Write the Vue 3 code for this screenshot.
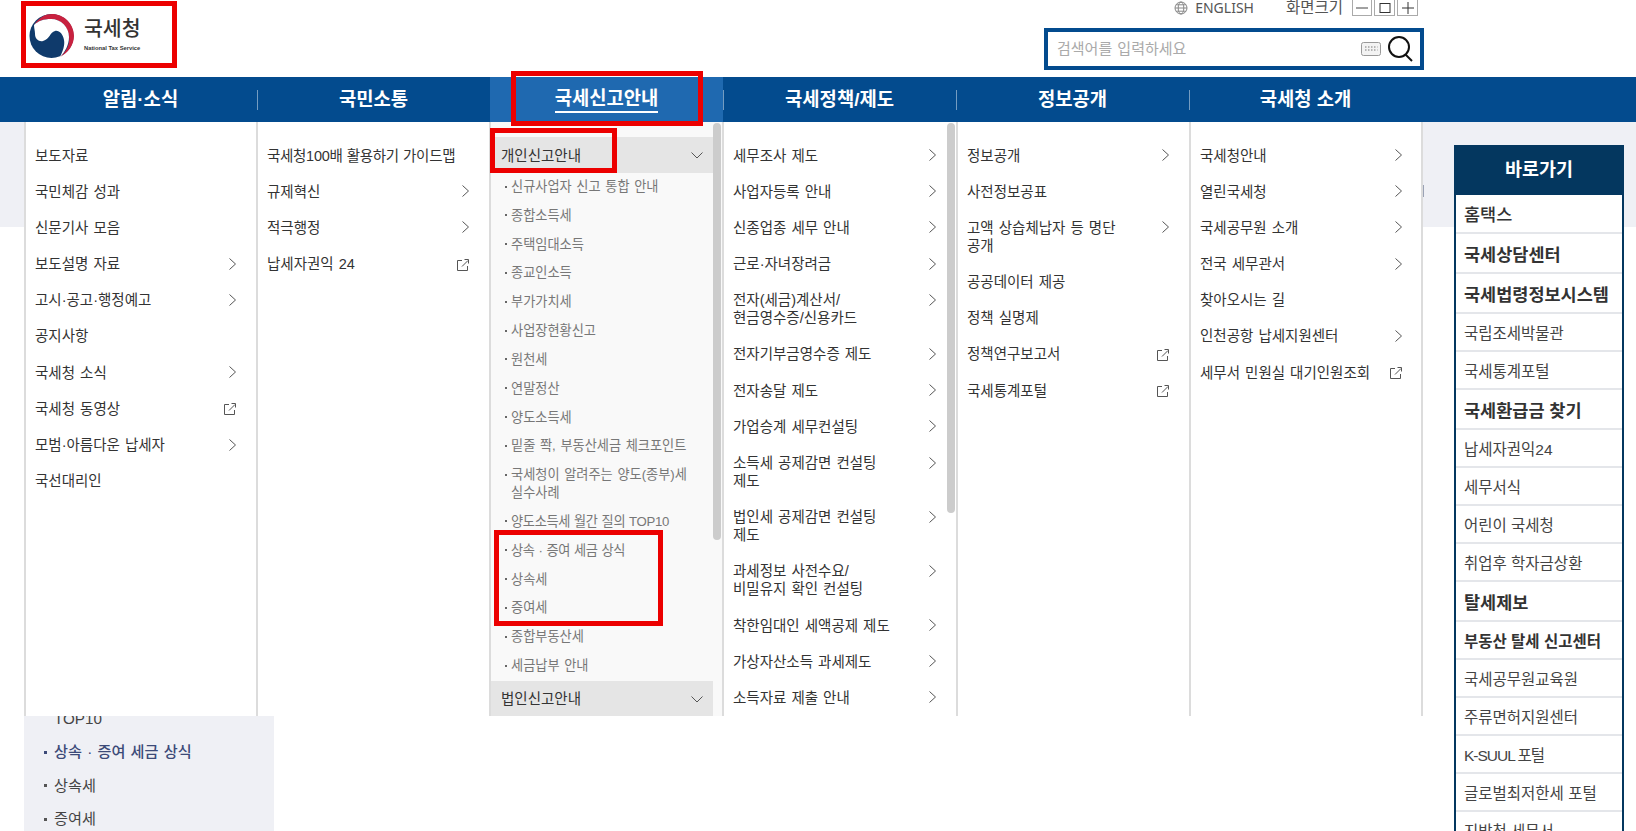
<script setup>
const navItems = ['알림·소식', '국민소통', '국세신고안내', '국세정책/제도', '정보공개', '국세청 소개']

const col1 = [
  { t: '보도자료' },
  { t: '국민체감 성과' },
  { t: '신문기사 모음' },
  { t: '보도설명 자료', i: 'arrow' },
  { t: '고시·공고·행정예고', i: 'arrow' },
  { t: '공지사항' },
  { t: '국세청 소식', i: 'arrow' },
  { t: '국세청 동영상', i: 'ext' },
  { t: '모범·아름다운 납세자', i: 'arrow' },
  { t: '국선대리인' }
]
const col2 = [
  { t: '국세청100배 활용하기 가이드맵', tight: true },
  { t: '규제혁신', i: 'arrow' },
  { t: '적극행정', i: 'arrow' },
  { t: '납세자권익 24', i: 'ext' }
]
const col4 = [
  { t: '세무조사 제도', i: 'arrow' },
  { t: '사업자등록 안내', i: 'arrow' },
  { t: '신종업종 세무 안내', i: 'arrow' },
  { t: '근로·자녀장려금', i: 'arrow' },
  { t: '전자(세금)계산서/\n현금영수증/신용카드', i: 'arrow' },
  { t: '전자기부금영수증 제도', i: 'arrow' },
  { t: '전자송달 제도', i: 'arrow' },
  { t: '가업승계 세무컨설팅', i: 'arrow' },
  { t: '소득세 공제감면 컨설팅\n제도', i: 'arrow' },
  { t: '법인세 공제감면 컨설팅\n제도', i: 'arrow' },
  { t: '과세정보 사전수요/\n비밀유지 확인 컨설팅', i: 'arrow' },
  { t: '착한임대인 세액공제 제도', i: 'arrow' },
  { t: '가상자산소득 과세제도', i: 'arrow' },
  { t: '소득자료 제출 안내', i: 'arrow' }
]
const col5 = [
  { t: '정보공개', i: 'arrow' },
  { t: '사전정보공표' },
  { t: '고액 상습체납자 등 명단\n공개', i: 'arrow' },
  { t: '공공데이터 제공' },
  { t: '정책 실명제' },
  { t: '정책연구보고서', i: 'ext' },
  { t: '국세통계포털', i: 'ext' }
]
const col6 = [
  { t: '국세청안내', i: 'arrow' },
  { t: '열린국세청', i: 'arrow' },
  { t: '국세공무원 소개', i: 'arrow' },
  { t: '전국 세무관서', i: 'arrow' },
  { t: '찾아오시는 길' },
  { t: '인천공항 납세지원센터', i: 'arrow' },
  { t: '세무서 민원실 대기인원조회', i: 'ext' }
]
const columns = [
  { key: 'a', rows: col1 },
  { key: 'b', rows: col2 },
  { key: 'c', sub: true },
  { key: 'd', rows: col4, thumb: true },
  { key: 'e', rows: col5 },
  { key: 'f', rows: col6 }
]

const subItems = [
  { t: '신규사업자 신고 통합 안내' },
  { t: '종합소득세' },
  { t: '주택임대소득' },
  { t: '종교인소득' },
  { t: '부가가치세' },
  { t: '사업장현황신고' },
  { t: '원천세' },
  { t: '연말정산' },
  { t: '양도소득세' },
  { t: '밑줄 쫙, 부동산세금 체크포인트' },
  { t: '국세청이 알려주는 양도(종부)세\n실수사례' },
  { t: '양도소득세 월간 질의 TOP10', tight: true },
  { t: '상속 · 증여 세금 상식', mark: true, tight: true },
  { t: '상속세' },
  { t: '증여세' },
  { t: '종합부동산세' },
  { t: '세금납부 안내' }
]

const quickLinks = [
  { t: '홈택스', c: 'home' },
  { t: '국세상담센터', c: 'lg' },
  { t: '국세법령정보시스템', c: 'lg' },
  { t: '국립조세박물관' },
  { t: '국세통계포털' },
  { t: '국세환급금 찾기', c: 'lg' },
  { t: '납세자권익24' },
  { t: '세무서식' },
  { t: '어린이 국세청' },
  { t: '취업후 학자금상환' },
  { t: '탈세제보', c: 'lg' },
  { t: '부동산 탈세 신고센터', c: 'bold' },
  { t: '국세공무원교육원' },
  { t: '주류면허지원센터' },
  { t: 'K-SUUL 포털', c: 'narrow' },
  { t: '글로벌최저한세 포털' },
  { t: '지방청 세무서' }
]
</script>

<template>
  <div class="page">
    <header class="top">
      <a class="logo">
        <svg class="emblem" viewBox="0 0 45 44" width="45" height="44">
          <circle cx="22.5" cy="22" r="22" fill="#0f3a6b" />
          <path d="M5 11C10 3 17 0 23 0C35 0 45 10 45 22C45 31 39 39 31 43C38 37 41 30 40 22C39 12 31 5 22 5C15 5 9 7 5 11Z" fill="#c8213f" />
          <path d="M5 11C9 7 15 5 22 5C32 5 40 13 40 23C40 31 36 38 31 43C34 37 36 31 35 26C34 20 30 16 26 17C21 18 21 25 14 27C10 28 6 25 6 20C6 17 5 14 5 11Z" fill="#fff" />
        </svg>
        <span class="logo-text">
          <strong>국세청</strong>
          <small>National Tax Service</small>
        </span>
      </a>
      <div class="top-right">
        <div class="util">
          <svg class="globe" viewBox="0 0 14 14" width="14" height="14" fill="none" stroke="#888" stroke-width="1">
            <circle cx="7" cy="7" r="6" />
            <ellipse cx="7" cy="7" rx="2.8" ry="6" />
            <path d="M1 7H13M2 3.8H12M2 10.2H12" />
          </svg>
          <span class="eng">ENGLISH</span>
          <span class="size-label">화면크기</span>
          <div class="size-btns">
            <button>
              <svg viewBox="0 0 12 12" width="12" height="12"><path d="M0 6H12" stroke="#444" /></svg>
            </button>
            <button>
              <svg viewBox="0 0 12 12" width="12" height="12"><rect x="1" y="1.5" width="10" height="9" fill="none" stroke="#333" /></svg>
            </button>
            <button>
              <svg viewBox="0 0 12 12" width="12" height="12"><path d="M0 6H12M6 0V12" stroke="#333" /></svg>
            </button>
          </div>
        </div>
        <div class="search">
          <input type="text" placeholder="검색어를 입력하세요" />
          <svg class="kbd" viewBox="0 0 20 14" width="20" height="14" fill="none">
            <rect x="0.5" y="0.5" width="19" height="13" rx="2" fill="#f3f3f3" stroke="#999" />
            <path d="M4 5H5.5M7 5H8.5M10 5H11.5M13 5H14.5M16 5H16.5M4 8H5.5M7 8H8.5M10 8H11.5M13 8H14.5M16 8H16.5" stroke="#777" />
          </svg>
          <svg class="glass" viewBox="0 0 25 26" width="25" height="26" fill="none" stroke="#111" stroke-width="2">
            <circle cx="11" cy="11" r="10" />
            <path d="M17.5 18.5L24 25" />
          </svg>
        </div>
      </div>
    </header>

    <nav class="gnb">
      <a v-for="(n, i) in navItems" :key="n" class="gnb-item" :class="{ active: i === 2 }">
        <span class="gnb-label">{{ n }}</span>
        <i v-if="i === 2" class="mark mark-nav"></i>
      </a>
    </nav>

    <main class="main">
      <section class="side">
        <ul>
          <li class="clip"><span></span>TOP10</li>
          <li class="on"><span class="dot"></span>상속 · 증여 세금 상식</li>
          <li><span class="dot"></span>상속세</li>
          <li><span class="dot"></span>증여세</li>
        </ul>
      </section>

      <aside class="quick">
        <h2>바로가기</h2>
        <a v-for="q in quickLinks" :key="q.t" class="quick-row" :class="q.c">{{ q.t }}</a>
      </aside>

      <div class="dropdown">
        <div v-for="c in columns" :key="c.key" class="col" :class="{ 'col-sub': c.sub }">
          <template v-if="!c.sub">
            <div v-for="r in c.rows" :key="r.t" class="row">
              <span class="row-text" :class="{ tight: r.tight }">{{ r.t }}</span>
              <svg v-if="r.i === 'arrow'" class="ico" viewBox="0 0 7 12" width="7" height="12" fill="none" stroke="#555">
                <path d="M0.5 0.5L6.5 6L0.5 11.5" />
              </svg>
              <svg v-if="r.i === 'ext'" class="ico ext" viewBox="0 0 12 12" width="12" height="12" fill="none" stroke="#555">
                <path d="M5 1.5H0.5V11.5H10.5V7" />
                <path d="M5 7.5L11 1.5M7.5 0.5H11.5V4.5" />
              </svg>
            </div>
          </template>
          <template v-else>
            <div class="acc-head">
              <span>개인신고안내</span>
              <svg viewBox="0 0 12 7" width="12" height="7" fill="none" stroke="#555"><path d="M0.5 0.5L6 6L11.5 0.5" /></svg>
              <i class="mark mark-head"></i>
            </div>
            <ul class="subs">
              <li v-for="s in subItems" :key="s.t">
                <span class="row-text" :class="{ tight: s.tight }">{{ s.t }}</span>
                <i v-if="s.mark" class="mark mark-subs"></i>
              </li>
            </ul>
            <div class="acc-head">
              <span>법인신고안내</span>
              <svg viewBox="0 0 12 7" width="12" height="7" fill="none" stroke="#555"><path d="M0.5 0.5L6 6L11.5 0.5" /></svg>
            </div>
          </template>
          <i v-if="c.sub" class="thumb thumb-c"></i>
          <i v-if="c.thumb" class="thumb thumb-d"></i>
        </div>
      </div>
    </main>
  </div>
</template>

<style>
html,
body {
  margin: 0;
  overflow: hidden;
  background: #fff;
}
</style>

<style scoped>
.page {
  width: 1636px;
  height: 831px;
  overflow: hidden;
  font-family: "Liberation Sans", "Noto Sans CJK KR", sans-serif;
  color: #333;
}

.top {
  height: 77px;
  box-sizing: border-box;
  display: flex;
  justify-content: space-between;
  align-items: flex-start;
  padding: 1px 212px 0 21px;
}

.logo {
  width: 156px;
  height: 67px;
  box-sizing: border-box;
  border: 5px solid #ec0000;
  display: flex;
  align-items: flex-start;
  padding: 8px 0 0 3px;
}
.emblem {
  flex: none;
}
.logo-text {
  display: flex;
  flex-direction: column;
  margin-left: 10px;
  margin-top: 3px;
}
.logo-text strong {
  font-size: 20.5px;
  line-height: 24px;
  font-weight: 500;
  color: #333;
}
.logo-text small {
  font-size: 5.8px;
  font-weight: 700;
  line-height: 8px;
  margin-top: 3px;
  color: #333;
}

.top-right {
  display: flex;
  flex-direction: column;
  align-items: flex-end;
  margin-top: -1px;
}
.util {
  height: 16px;
  display: flex;
  align-items: center;
  margin-right: 6px;
  margin-bottom: 12px;
  font-size: 15.5px;
  line-height: 16px;
  color: #555;
}
.globe {
  margin-right: 7px;
}
.eng {
  font-family: "Noto Sans", sans-serif;
  font-size: 14px;
  white-space: nowrap;
}
.size-label {
  margin-left: 32px;
  margin-top: -1px;
}
.size-btns {
  display: flex;
  gap: 2px;
  margin-left: 9px;
}
.size-btns button {
  width: 20px;
  height: 16px;
  padding: 0;
  border: 1px solid #aaa;
  border-top: 0;
  background: #fff;
  display: flex;
  align-items: center;
  justify-content: center;
}
.size-btns button:nth-child(n + 2) {
  width: 21px;
}

.search {
  width: 380px;
  height: 42px;
  box-sizing: border-box;
  border: 4px solid #034b8e;
  display: flex;
  align-items: center;
  padding: 0 7px 0 9px;
}
.search input {
  flex: 1;
  min-width: 0;
  border: 0;
  outline: 0;
  padding: 0 0 2px;
  font: inherit;
  font-size: 15px;
  word-spacing: 1px;
}
.search input::placeholder {
  color: #aaa;
}
.kbd {
  margin-right: 7px;
}

.gnb {
  position: relative;
  z-index: 2;
  height: 45px;
  background: #034b8e;
  display: flex;
  padding-left: 24px;
}
.gnb-item {
  position: relative;
  width: 233px;
  flex: none;
  display: flex;
  align-items: center;
  justify-content: center;
  box-sizing: border-box;
  color: #fff;
  font-size: 18.8px;
  font-weight: 700;
  line-height: 24px;
}
.gnb-item:not(:last-child)::after {
  content: "";
  position: absolute;
  right: -1px;
  top: 13px;
  height: 20px;
  border-right: 1px solid rgba(255, 255, 255, 0.45);
}
.gnb-item.active {
  background: #1f69b0;
}
.gnb-item.active .gnb-label {
  border-bottom: 2px solid #fff;
  margin-top: 1px;
}

.mark {
  position: absolute;
  box-sizing: border-box;
  border: 5px solid #ec0000;
  display: block;
  z-index: 3;
}
.mark-nav {
  left: 21px;
  top: -6px;
  width: 192px;
  height: 55px;
}
.mark-head {
  left: -1px;
  top: -9px;
  width: 127px;
  height: 45px;
}
.mark-subs {
  left: 3px;
  top: -7px;
  width: 169px;
  height: 96px;
}

.main {
  position: relative;
  height: 709px;
  display: flex;
  justify-content: space-between;
  align-items: flex-start;
  background: linear-gradient(#eff0f5 105px, #fff 105px);
}
.main::after {
  content: "";
  position: absolute;
  left: 1423px;
  top: 63px;
  width: 1px;
  height: 12px;
  background: #9aa2b5;
}

.side {
  margin: 594px 0 0 24px;
  width: 250px;
  height: 115px;
  background: #eff0f5;
  overflow: hidden;
}
.side ul {
  list-style: none;
  margin: -6px 0 0;
  padding: 0 0 0 20px;
  font-size: 15.2px;
  line-height: 18px;
  word-spacing: 1px;
  color: #444;
}
.side li {
  display: flex;
  align-items: center;
  height: 18px;
  margin-bottom: 15.4px;
}
.side .clip {
  padding-left: 10px;
}
.side .dot {
  width: 3px;
  height: 3px;
  background: #555;
  margin-right: 7px;
}
.side .on {
  color: #3c4a78;
  font-weight: 500;
}
.side .on .dot {
  background: #3c4a78;
}

.quick {
  margin: 23px 12px 0 0;
  width: 170px;
  box-sizing: border-box;
  border: 2px solid #04375f;
  border-bottom: 0;
  background: #fff;
}
.quick h2 {
  margin: -2px -2px 0;
  height: 50px;
  background: #04375f;
  color: #fff;
  font-size: 18.5px;
  font-weight: 700;
  line-height: 50px;
  text-align: center;
}
.quick-row {
  display: flex;
  align-items: center;
  height: 38px;
  box-sizing: border-box;
  padding-left: 8px;
  border-bottom: 2px solid #e4e6ea;
  font-size: 15.5px;
  color: #444;
}
.quick-row.lg {
  height: 40px;
  font-size: 17.5px;
  font-weight: 700;
  color: #333;
}
.quick-row.home {
  height: 39px;
  font-size: 17.5px;
  font-weight: 500;
  color: #333;
}
.quick-row.bold {
  font-weight: 700;
  color: #333;
}
.quick-row.narrow {
  letter-spacing: -1px;
}

.dropdown {
  position: absolute;
  left: 24px;
  top: 0;
  height: 594px;
  display: grid;
  grid-template-columns: 232px 233px 233px 234px 233px 234px;
  background: #fff;
  z-index: 1;
}
.col {
  position: relative;
  box-sizing: border-box;
  border-left: 2px solid #dcdcdc;
  padding: 15px 20px 0 9px;
  overflow: hidden;
  height: 594px;
}
.col:last-child {
  border-right: 2px solid #dcdcdc;
  padding-right: 19px;
}
.row {
  display: flex;
  justify-content: space-between;
  align-items: flex-start;
  padding: 9.5px 0 8.7px;
  font-size: 14.5px;
  line-height: 18px;
  word-spacing: 1px;
  color: #333;
}
.row-text {
  white-space: pre-line;
}
.row-text.tight {
  letter-spacing: -0.3px;
  word-spacing: 0.5px;
}
.ico {
  flex: none;
  margin-top: 2.5px;
}
.ico.ext {
  margin-top: 3.5px;
}

.col-sub {
  padding: 15px 0 0;
  background: #f9f9f9;
  overflow: visible;
  clip-path: inset(-10px -10px 0 -10px);
  height: 594px;
}
.acc-head {
  position: relative;
  width: 222px;
  height: 36px;
  box-sizing: border-box;
  padding: 1px 10px 0;
  background: #e5e5e5;
  display: flex;
  align-items: center;
  justify-content: space-between;
  font-size: 14.5px;
  line-height: 18px;
  color: #333;
}
.subs {
  list-style: none;
  margin: 0;
  padding: 0;
  width: 222px;
}
.subs li {
  position: relative;
  padding: 5px 0 5.82px 20px;
  font-size: 13.2px;
  line-height: 18px;
  word-spacing: 1px;
  color: #777;
}
.subs li::before {
  content: "";
  position: absolute;
  left: 14px;
  top: 12.5px;
  width: 2px;
  height: 2px;
  background: #666;
}

.thumb {
  position: absolute;
  right: 1px;
  top: 1px;
  width: 8px;
  border-radius: 4px;
  background: #ccc;
  display: block;
}
.thumb-c {
  height: 417px;
}
.thumb-d {
  height: 390px;
}
</style>
